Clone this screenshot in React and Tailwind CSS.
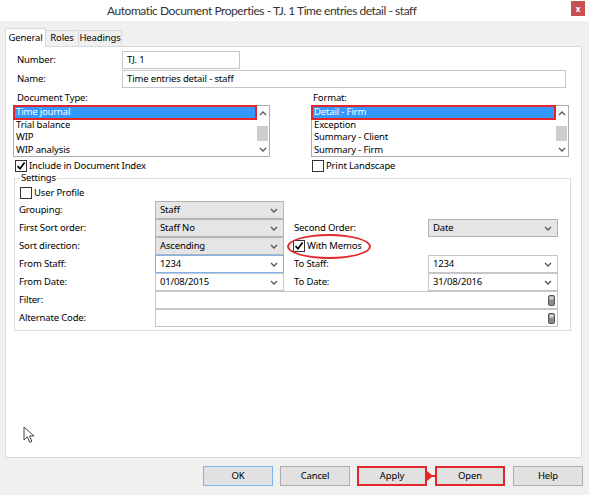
import clsx from "clsx";

function Check({ checked }) {
  return (
    <span className="w-[12px] h-[12px] border border-[#333] bg-white flex items-center justify-center shrink-0">
      {checked && (
        <svg width="10" height="10" viewBox="0 0 10 10">
          <path d="M1.5 5.2 L4 7.8 L8.6 1.6" stroke="#000" strokeWidth="1.7" fill="none" />
        </svg>
      )}
    </span>
  );
}

function Chevron({ up }) {
  return (
    <svg width="8" height="5" viewBox="0 0 8 5">
      <path d={up ? "M1 4 L4 1 L7 4" : "M1 1 L4 4 L7 1"} stroke="#555" strokeWidth="1.3" fill="none" />
    </svg>
  );
}

function Combo({ value, white, focus }) {
  return (
    <div
      className={clsx(
        "h-[18px] border flex items-center justify-between pl-[4px] pr-[5px]",
        white ? "bg-white" : "bg-[#e5e5e5]",
        focus ? "border-[#7eb4ea]" : white ? "border-[#c4c6cc]" : "border-[#b4b4b4]"
      )}
    >
      <span>{value}</span>
      <Chevron />
    </div>
  );
}

function NoteInput() {
  return (
    <div className="col-span-3 h-[18px] border border-[#c4c6cc] bg-white flex items-center justify-end pr-[2px]">
      <svg width="7" height="11" viewBox="0 0 7 11">
        <rect x="0.5" y="0.5" width="6" height="10" rx="1.2" fill="#8a8a8a" stroke="#555" />
        <rect x="1.6" y="1.6" width="3.8" height="3" fill="#d8d8d8" />
      </svg>
    </div>
  );
}

function ListBox({ items }) {
  return (
    <div className="h-[52px] border border-[#abadb3] bg-white flex">
      <div className="flex-1 flex flex-col">
        {items.map((it, i) => (
          <div
            key={it}
            className={clsx(
              "h-[12.5px] leading-[12.5px] pl-[2px]",
              i === 0 && "bg-[#3399ff] text-white outline-2 outline-[#e3262b] -outline-offset-1"
            )}
          >
            {it}
          </div>
        ))}
      </div>
      <div className="w-[13px] flex flex-col items-center">
        <div className="h-[14px] flex items-center justify-center">
          <Chevron up />
        </div>
        <div className="h-[6px]" />
        <div className="h-[15px] w-[11px] bg-[#cdcdcd]" />
        <div className="flex-1" />
        <div className="h-[14px] flex items-center justify-center">
          <Chevron />
        </div>
      </div>
    </div>
  );
}

function Button({ label, kind }) {
  return (
    <div
      className={clsx(
        "w-[70px] h-[20px] flex items-center justify-center bg-[#e1e1e1]",
        kind === "ok" && "border border-[#7eb4ea]",
        kind === "red" && "border-2 border-[#e3262b]",
        !kind && "border border-[#adadad]"
      )}
    >
      {label}
    </div>
  );
}

export default function App() {
  return (
    <div className="w-[589px] h-[495px] bg-[#f0f0f0] font-['Noto_Sans',sans-serif] text-[9.5px] tracking-[-0.15px] text-black overflow-hidden">
      {/* title bar */}
      <div className="h-[21px] bg-white flex items-start">
        <div className="pl-[107px] pt-[2px] font-['Lato',sans-serif] text-[12px] tracking-[-0.45px] text-[#333] leading-[17px]">
          Automatic Document Properties - TJ. 1 Time entries detail - staff
        </div>
        <div className="ml-auto mr-[4px] mt-[1px] w-[14px] h-[15px] bg-[#c75050] flex items-center justify-center text-white text-[8px] font-bold leading-none">
          x
        </div>
      </div>

      {/* tabs */}
      <div className="mt-[7px] h-[19px] px-[5px] flex items-end relative z-10 -mb-px">
        <div className="w-[41px] h-[19px] border border-b-0 border-[#d9d9d9] bg-white flex items-center justify-center">General</div>
        <div className="w-[33px] h-[16px] mb-[1px] border border-l-0 border-b-0 border-[#d9d9d9] flex items-center justify-center">Roles</div>
        <div className="w-[43px] h-[16px] mb-[1px] border border-l-0 border-b-0 border-[#d9d9d9] flex items-center justify-center">Headings</div>
      </div>

      {/* panel */}
      <div className="relative ml-[5px] w-[577px] h-[412px] bg-white border border-[#d9d9d9] pt-[4px]">
        <div className="h-[18px] flex items-center">
          <div className="w-[116px] pl-[11px]">Number:</div>
          <div className="w-[118px] h-[18px] border border-[#c4c6cc] flex items-center pl-[4px]">TJ. 1</div>
        </div>
        <div className="mt-[1px] h-[18px] flex items-center">
          <div className="w-[116px] pl-[11px]">Name:</div>
          <div className="w-[444px] h-[18px] border border-[#c4c6cc] flex items-center pl-[4px]">Time entries detail - staff</div>
        </div>

        <div className="mt-[3px] pl-[7px] flex">
          <div className="w-[257px]">
            <div className="h-[14px] pl-[4px] leading-[14px]">Document Type:</div>
            <ListBox items={["Time journal", "Trial balance", "WIP", "WIP analysis"]} />
            <div className="mt-[2px] h-[14px] pl-[2px] flex items-center gap-[2px]">
              <Check checked />
              <span>Include in Document Index</span>
            </div>
          </div>
          <div className="ml-[41px] w-[258px]">
            <div className="h-[14px] pl-[2px] leading-[14px]">Format:</div>
            <ListBox items={["Detail - Firm", "Exception", "Summary - Client", "Summary - Firm"]} />
            <div className="mt-[2px] h-[14px] pl-[1px] flex items-center gap-[2px]">
              <Check />
              <span>Print Landscape</span>
            </div>
          </div>
        </div>

        {/* settings group */}
        <div className="mt-[5px] ml-[8px] w-[557px] border border-[#dcdcdc] pb-[3px]">
          <div className="-mt-[8px] ml-[5px] w-fit h-[14px] px-[1px] bg-white leading-[14px]">Settings</div>
          <div className="mt-[1px] h-[14px] pl-[5px] flex items-center gap-[2px]">
            <Check />
            <span>User Profile</span>
          </div>
          <div className="mt-[1px] pl-[4px] grid grid-cols-[136px_129px_144px_130px] auto-rows-[18px] items-center">
            <div>Grouping:</div>
            <Combo value="Staff" />
            <div />
            <div />

            <div>First Sort order:</div>
            <Combo value="Staff No" />
            <div className="pl-[10px]">Second Order:</div>
            <Combo value="Date" />

            <div>Sort direction:</div>
            <Combo value="Ascending" />
            <div className="relative h-full pl-[9px] flex items-center gap-[2px]">
              <Check checked />
              <span>With Memos</span>
              <div className="absolute left-[3px] top-[-3px] w-[84px] h-[25px] rounded-[50%] border-2 border-[#e3262b]" />
            </div>
            <div />

            <div>From Staff:</div>
            <Combo value="1234" white focus />
            <div className="pl-[10px]">To Staff:</div>
            <Combo value="1234" white />

            <div>From Date:</div>
            <Combo value="01/08/2015" white />
            <div className="pl-[10px]">To Date:</div>
            <Combo value="31/08/2016" white />

            <div>Filter:</div>
            <NoteInput />

            <div>Alternate Code:</div>
            <NoteInput />
          </div>
        </div>

        {/* mouse cursor */}
        <svg className="absolute left-[17px] top-[379px]" width="13" height="18" viewBox="0 0 13 18">
          <path d="M1 1 L1 14 L4.3 10.8 L6.8 16.3 L8.9 15.4 L6.5 10 L11 10 Z" fill="#fff" stroke="#444" strokeWidth="1" />
        </svg>
      </div>

      {/* buttons */}
      <div className="mt-[8px] pr-[6px] flex justify-end items-center">
        <Button label="OK" kind="ok" />
        <div className="w-[7px]" />
        <Button label="Cancel" />
        <div className="w-[7px]" />
        <Button label="Apply" kind="red" />
        <svg width="8" height="20" viewBox="0 0 8 20">
          <polygon points="0,5 6,10 0,15" fill="#e3262b" />
          <line x1="5" y1="10" x2="8" y2="10" stroke="#e3262b" strokeWidth="2" />
        </svg>
        <Button label="Open" kind="red" />
        <div className="w-[8px]" />
        <Button label="Help" />
      </div>
    </div>
  );
}
